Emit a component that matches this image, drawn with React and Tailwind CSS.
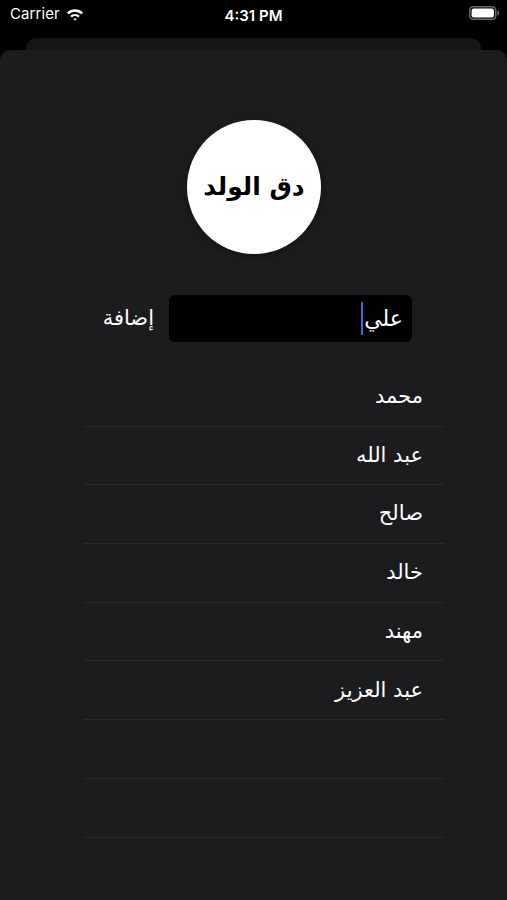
const NAMES = ["محمد", "عبد الله", "صالح", "خالد", "مهند", "عبد العزيز", "", ""];

const arabic = { fontFamily: '"DejaVu Sans", "Noto Sans", sans-serif' };
const latin = { fontFamily: '"Inter", "Liberation Sans", sans-serif' };

function WifiIcon() {
  return (
    <svg width="18" height="13" viewBox="0 0 18 13" className="text-white">
      <path d="M1 4.6 A11.5 11.5 0 0 1 17 4.6 L15.3 6.3 A9.1 9.1 0 0 0 2.7 6.3 Z" fill="currentColor" />
      <path d="M4.2 7.8 A7 7 0 0 1 13.8 7.8 L12.1 9.5 A4.6 4.6 0 0 0 5.9 9.5 Z" fill="currentColor" />
      <path d="M7.4 11 A2.4 2.4 0 0 1 10.6 11 L9 12.7 Z" fill="currentColor" />
    </svg>
  );
}

function BatteryIcon() {
  return (
    <svg width="30" height="14" viewBox="0 0 30 14">
      <rect x="0.75" y="0.75" width="26" height="12.5" rx="3.5" fill="none" stroke="#6b6b6b" strokeWidth="1.5" />
      <rect x="2.6" y="2.6" width="22.3" height="8.8" rx="2" fill="#fff" />
      <path d="M28.4 4.8 a2.2 2.2 0 0 1 0 4.4 Z" fill="#6b6b6b" />
    </svg>
  );
}

export default function App() {
  return (
    <div className="w-[507px] h-[900px] bg-black flex flex-col overflow-hidden">
      <div className="h-[38px] shrink-0 relative flex items-center px-[10px] text-white">
        <div className="flex items-center gap-[6px] -mt-[9px]">
          <span className="text-[15px] tracking-[0.1px]" style={latin}>Carrier</span>
          <WifiIcon />
        </div>
        <div className="absolute left-0 right-0 top-[5px] text-center text-[15px] font-semibold" style={latin}>4:31 PM</div>
        <div className="ml-auto -mt-[12px] mr-[-2px]"><BatteryIcon /></div>
      </div>

      <div className="mx-[26px] h-[12px] shrink-0 rounded-t-[10px] bg-[#151516]" />

      <div className="flex-1 rounded-t-[11px] bg-[#1c1c1e] flex flex-col" style={arabic}>
        <div className="mt-[70px] ml-[187px] w-[134px] h-[134px] rounded-full bg-white flex items-center justify-center shadow-[0_2px_10px_rgba(0,0,0,0.35)]">
          <span dir="rtl" className="text-black text-[25px] font-bold">دق الولد</span>
        </div>

        <div className="mt-[41px] ml-[86px] w-[326px] flex items-center justify-end gap-[15px]">
          <span dir="rtl" className="text-white text-[21px]">إضافة</span>
          <div className="w-[243px] h-[47px] rounded-[6px] bg-black flex items-center justify-end pr-[9px]">
            <span className="w-[2px] h-[33px] bg-[#4467e6] mr-[1px]" />
            <span dir="rtl" className="text-white text-[22px] leading-none">علي</span>
          </div>
        </div>

        <div className="mt-[26px] ml-[84px] w-[360px] flex flex-col">
          {NAMES.map((n, i) => (
            <div key={i} className="h-[58.7px] border-b border-[#2a2a2d] flex items-center justify-end pr-[21px]">
              <span dir="rtl" className="text-white text-[21px]">{n}</span>
            </div>
          ))}
        </div>
      </div>
    </div>
  );
}
